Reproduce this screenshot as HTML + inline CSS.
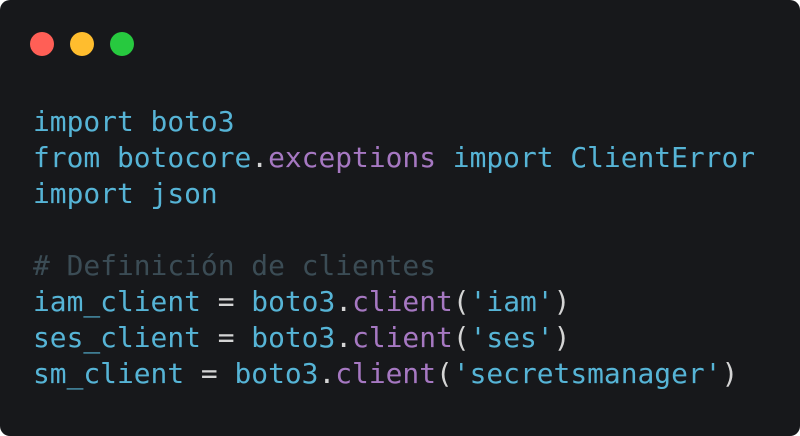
<!DOCTYPE html>
<html><head><meta charset="utf-8"><style>
html,body{margin:0;padding:0;background:#fff;}
.win{position:absolute;left:0;top:0;width:800px;height:436px;background:#17181b;border-radius:10px;overflow:hidden;}
.dot{position:absolute;top:32px;width:24px;height:24px;border-radius:50%;}
pre{position:absolute;left:33px;top:104px;margin:0;font-family:"DejaVu Sans Mono","Liberation Mono",monospace;font-size:27.9px;line-height:36px;color:#56b4d6;}
.p{color:#a678c2}.w{color:#d4d4d4}.c{color:#3b4c55}
</style></head><body><div class="win">
<div class="dot" style="left:30px;background:#ff5f56"></div>
<div class="dot" style="left:70px;background:#ffbd2e"></div>
<div class="dot" style="left:110px;background:#27c93f"></div>
<pre>import boto3
from botocore<span class="w">.</span><span class="p">exceptions</span> import ClientError
import json

<span class="c"># Definición de clientes</span>
iam_client <span class="w">=</span> boto3<span class="w">.</span><span class="p">client</span><span class="w">(</span>'iam'<span class="w">)</span>
ses_client <span class="w">=</span> boto3<span class="w">.</span><span class="p">client</span><span class="w">(</span>'ses'<span class="w">)</span>
sm_client <span class="w">=</span> boto3<span class="w">.</span><span class="p">client</span><span class="w">(</span>'secretsmanager'<span class="w">)</span></pre>
</div></body></html>
